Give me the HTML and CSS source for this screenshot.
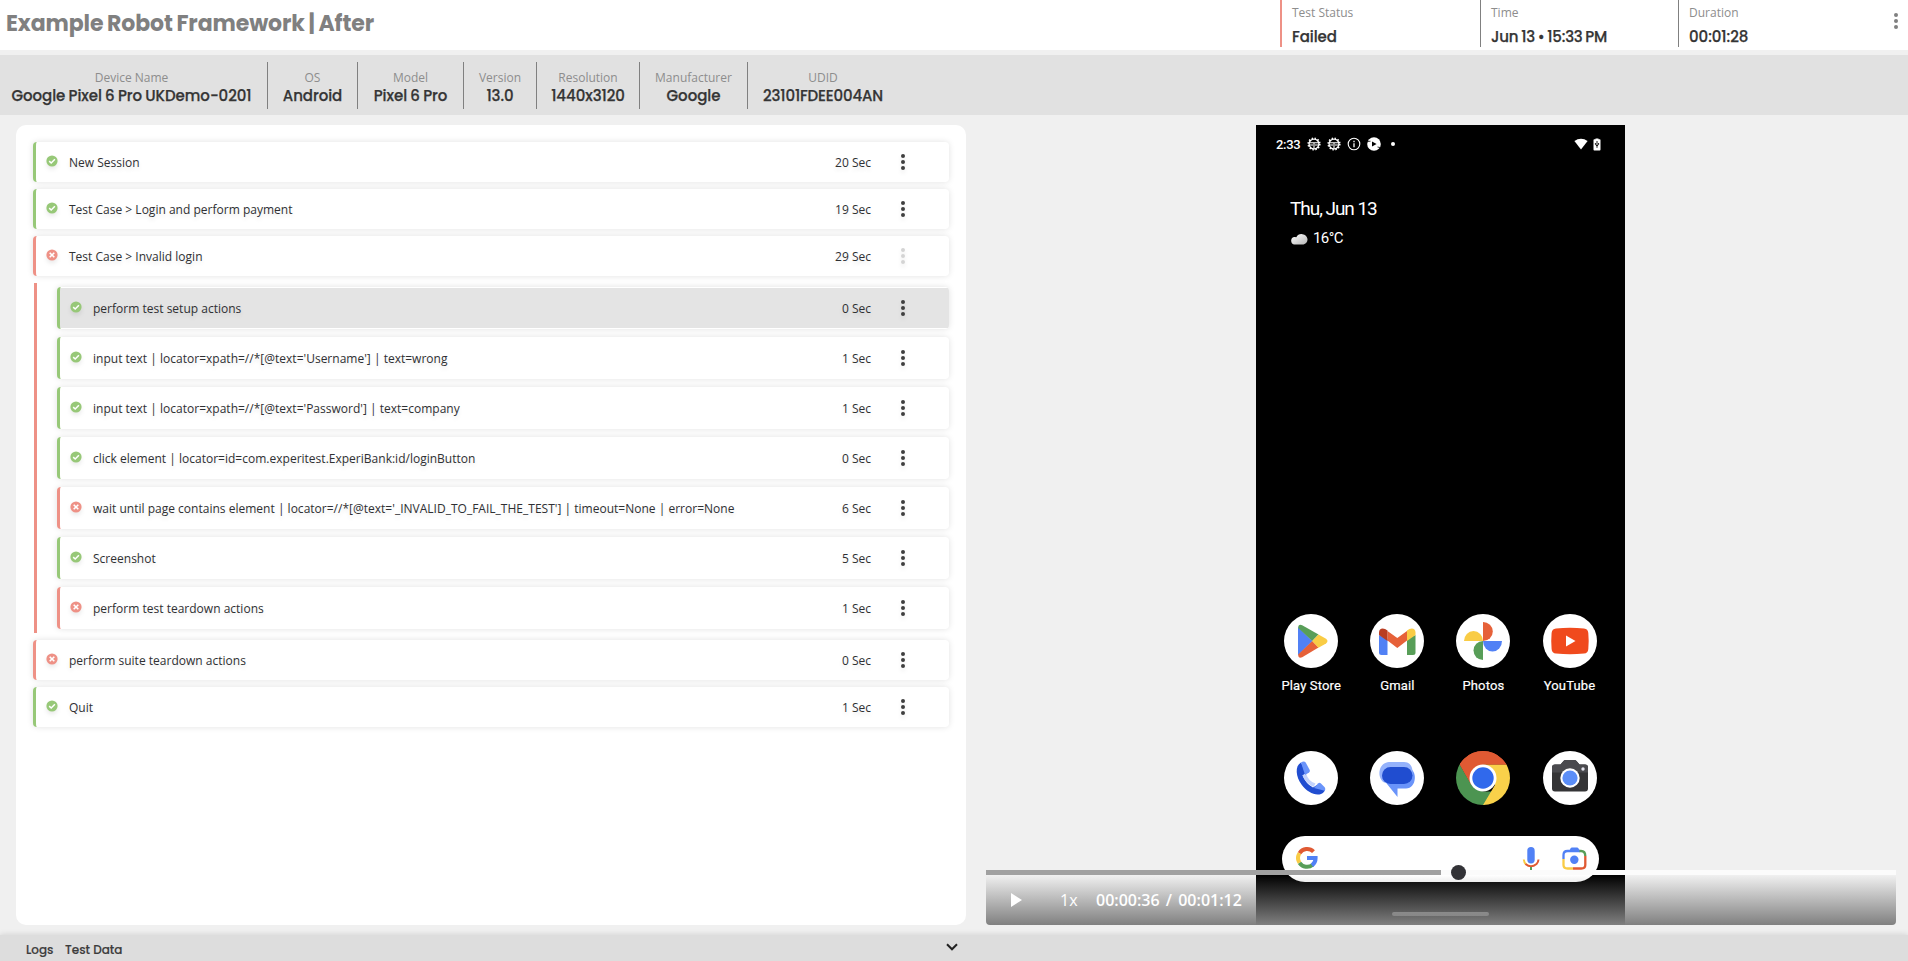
FILE: index.html
```html
<!DOCTYPE html>
<html lang="en">
<head>
<meta charset="utf-8">
<title>Example Robot Framework | After</title>
<link rel="stylesheet" href="styles.css">
</head>
<body>
<svg class="defs" width="0" height="0">
  <symbol id="ok" viewBox="0 0 12 12"><circle cx="6" cy="6" r="5.6" fill="#97c878"/><path d="M3.2 6.1 5.2 8 8.900 4.300" fill="none" stroke="#fff" stroke-width="1.5"/></symbol>
  <symbol id="bad" viewBox="0 0 12 12"><circle cx="6" cy="6" r="5.6" fill="#ee9186"/><path d="M3.700 3.700 8.300 8.300M8.300 3.700 3.700 8.300" fill="none" stroke="#fff" stroke-width="1.600"/></symbol>
  <symbol id="dots" viewBox="0 0 4 16"><circle cx="2" cy="2" r="2"/><circle cx="2" cy="8" r="2"/><circle cx="2" cy="14" r="2"/></symbol>
  <symbol id="gear" viewBox="0 0 14 14"><circle cx="7" cy="7" r="5.8" fill="none" stroke="#fff" stroke-width="1.600" stroke-dasharray="1.4 1.63"/><circle cx="7" cy="7" r="4.9" fill="none" stroke="#fff" stroke-width="1.3"/><path d="M2.5 5.7h9M2.5 8h3.500M8 8h3.500M7 5.700v5.800" stroke="#fff" stroke-width="1.1"/></symbol>
</svg>
<header class="top">
  <h1 class="title">Example Robot Framework | After</h1>
  <div class="stat stat-failed"><span class="label">Test Status</span><span class="value">Failed</span></div>
  <div class="stat stat-time"><span class="label">Time</span><span class="value">Jun 13 • 15:33 PM</span></div>
  <div class="stat stat-last"><span class="label">Duration</span><span class="value">00:01:28</span></div>
  <svg class="top-menu" width="4" height="16"><use href="#dots"/></svg>
</header>
<section class="device">
  <div class="cell c1"><span class="label">Device Name</span><span class="value">Google Pixel 6 Pro UKDemo-0201</span></div>
  <div class="cell c2"><span class="label">OS</span><span class="value">Android</span></div>
  <div class="cell c3"><span class="label">Model</span><span class="value">Pixel 6 Pro</span></div>
  <div class="cell c4"><span class="label">Version</span><span class="value">13.0</span></div>
  <div class="cell c5"><span class="label">Resolution</span><span class="value">1440x3120</span></div>
  <div class="cell c6"><span class="label">Manufacturer</span><span class="value">Google</span></div>
  <div class="cell c7"><span class="label">UDID</span><span class="value">23101FDEE004AN</span></div>
</section>
<main class="main">
  <section class="panel">
    <div class="step pass"><svg class="ico"><use href="#ok"/></svg><span class="name">New Session</span><span class="time">20 Sec</span><svg class="more"><use href="#dots"/></svg></div>
    <div class="step pass"><svg class="ico"><use href="#ok"/></svg><span class="name">Test Case &gt; Login and perform payment</span><span class="time">19 Sec</span><svg class="more"><use href="#dots"/></svg></div>
    <div class="step fail"><svg class="ico"><use href="#bad"/></svg><span class="name">Test Case &gt; Invalid login</span><span class="time">29 Sec</span><svg class="more off"><use href="#dots"/></svg></div>
    <div class="children">
      <div class="step pass selected"><svg class="ico"><use href="#ok"/></svg><span class="name">perform test setup actions</span><span class="time">0 Sec</span><svg class="more"><use href="#dots"/></svg></div>
      <div class="step pass"><svg class="ico"><use href="#ok"/></svg><span class="name">input text | locator=xpath=//*[@text='Username'] | text=wrong</span><span class="time">1 Sec</span><svg class="more"><use href="#dots"/></svg></div>
      <div class="step pass"><svg class="ico"><use href="#ok"/></svg><span class="name">input text | locator=xpath=//*[@text='Password'] | text=company</span><span class="time">1 Sec</span><svg class="more"><use href="#dots"/></svg></div>
      <div class="step pass"><svg class="ico"><use href="#ok"/></svg><span class="name">click element | locator=id=com.experitest.ExperiBank:id/loginButton</span><span class="time">0 Sec</span><svg class="more"><use href="#dots"/></svg></div>
      <div class="step fail"><svg class="ico"><use href="#bad"/></svg><span class="name">wait until page contains element | locator=//*[@text='_INVALID_TO_FAIL_THE_TEST'] | timeout=None | error=None</span><span class="time">6 Sec</span><svg class="more"><use href="#dots"/></svg></div>
      <div class="step pass"><svg class="ico"><use href="#ok"/></svg><span class="name">Screenshot</span><span class="time">5 Sec</span><svg class="more"><use href="#dots"/></svg></div>
      <div class="step fail"><svg class="ico"><use href="#bad"/></svg><span class="name">perform test teardown actions</span><span class="time">1 Sec</span><svg class="more"><use href="#dots"/></svg></div>
    </div>
    <div class="step fail"><svg class="ico"><use href="#bad"/></svg><span class="name">perform suite teardown actions</span><span class="time">0 Sec</span><svg class="more"><use href="#dots"/></svg></div>
    <div class="step pass"><svg class="ico"><use href="#ok"/></svg><span class="name">Quit</span><span class="time">1 Sec</span><svg class="more"><use href="#dots"/></svg></div>
  </section>
  <section class="video">
    <div class="phone">
      <div class="status">
        <span class="clock">2:33</span>
        <svg width="14" height="14"><use href="#gear"/></svg>
        <svg width="14" height="14"><use href="#gear"/></svg>
        <svg width="14" height="14" viewBox="0 0 14 14"><circle cx="7" cy="7" r="5.800" fill="none" stroke="#fff" stroke-width="1.1"/><path d="M7 6.2v4M7 3.8v1.4" stroke="#fff" stroke-width="1.3"/></svg>
        <svg width="14" height="14" viewBox="0 0 14 14"><circle cx="7" cy="7" r="6.8" fill="#fff"/><path d="M5 4.400v5.200L9.600 7z"/><path d="M.5 4.500 3.500 4.200M13 10.500 10.500 10" stroke="#000" stroke-width=".8"/></svg>
        <i class="dot"></i>
        <svg class="wifi" width="14" height="12" viewBox="0 0 14 12"><path d="M.4 3.1C4.2-.2 9.8-.2 13.6 3.1L7 11.5z" fill="#fff"/></svg>
        <svg width="8" height="13" viewBox="0 0 8 13"><path d="M1.3 1.3h1.2V.4h3v.9h1.2q.8 0 .8.8v9.500q0 .9-.8.9H1.3q-.8 0-.8-.9v-9.500q0-.8.8-.8z" fill="#fff"/><path d="M4 3v6.800M2.400 5v1.600L4 7.800l1.600-1.200V5" fill="none" stroke="#000" stroke-width=".9"/></svg>
      </div>
      <div class="date">Thu, Jun 13</div>
      <div class="weather"><svg width="18" height="13" viewBox="0 0 18 13"><defs><linearGradient id="cl" x2="1" y2="1"><stop stop-color="#fff"/><stop offset="1" stop-color="#b5b5b5"/></linearGradient></defs><path d="M4 12.500a3.900 3.900 0 0 1 0-7.500 3.500 3.500 0 0 1 2.300.3A6 6 0 0 1 17.500 7c.2 3-2 5.500-5 5.500z" fill="url(#cl)"/></svg><span>16°C</span></div>
      <div class="apps">
        <div class="app"><svg viewBox="0 0 54 54"><circle cx="27" cy="27" r="27" fill="#fff"/><path d="M14 13v28.500L28.500 27z" fill="#5181f5"/><path d="M14.200 14q0-4.500 4-2.800L34.500 20.500 28.300 27 14.200 14z" fill="#589e58"/><path d="M14.200 40.500q0 4.500 4 2.800L34.500 33.500 28.300 27z" fill="#e66139"/><path d="M34.500 20.500 42 24.800q3 2.300 0 4.700l-7.500 4.200L28.300 27z" fill="#f9cc45"/></svg><span>Play Store</span></div>
        <div class="app"><svg viewBox="0 0 54 54"><circle cx="27" cy="27" r="27" fill="#fff"/><path d="M9 21v17.500q0 2.500 2.500 2.500H17.500V25z" fill="#5181f5"/><path d="M45.500 21v17.500q0 2.500-2.500 2.500h-6V25z" fill="#589e58"/><path d="M17.500 17 27.300 24 37 17v9.500L27.300 34 17.500 26.500z" fill="#e66139"/><path d="M9 20V18.500c0-4.500 4.500-5.500 8.500-2v10.500L9 21z" fill="#b93d22"/><path d="M45.500 21V18.500c0-4.500-4.500-5.500-8.500-2v10.500z" fill="#f9cc45"/></svg><span>Gmail</span></div>
        <div class="app"><svg viewBox="0 0 54 54"><circle cx="27" cy="27" r="27" fill="#fff"/><path d="M27 27V8a9.800 9.500 0 0 1 0 19z" fill="#e66139"/><path d="M27 27h19a9.500 10.500 0 0 1-19 0z" fill="#5181f5"/><path d="M27 27v19a9.500 9.500 0 0 1 0-19z" fill="#589e58"/><path d="M27 27H8a9.500 10 0 0 1 19 0z" fill="#f9cc45"/></svg><span>Photos</span></div>
        <div class="app"><svg viewBox="0 0 54 54"><circle cx="27" cy="27" r="27" fill="#fff"/><path d="M13 14.500q14-1.300 28 0 4 .3 4.300 4.500.8 8 0 16-.3 4.300-4.300 4.600-14 1.300-28 0-4-.3-4.400-4.600-.7-8 0-16 .4-4.200 4.400-4.500z" fill="#f04a1d"/><path d="M23 21.500v11l9.500-5.500z" fill="#fff"/></svg><span>YouTube</span></div>
      </div>
      <div class="apps dock">
        <div class="app"><svg viewBox="0 0 54 54"><circle cx="27" cy="27" r="27" fill="#fff"/><path d="M17 11.500C10.500 15 12 26 17.500 33.500 23 41 31 45 37 43q2.500-1 4-3.500L33 34l-4 2.500q-7-3.500-10.500-12L22 22z" fill="#204dd0"/><path d="M18.500 24.500Q21.500 32 29.500 36l2-3.500q-7-2-9.500-10z" fill="#c3d3fd"/><path d="M17 11.500q3-2 4.700 0l4 7.500q.6 1.500-.7 2.500L21 24z" fill="#6a94fa"/><path d="M30 37l4-4.500q1.300-1.300 2.700-.2l4 4q1.300 1.700 0 3.400z" fill="#6a94fa"/></svg></div>
        <div class="app"><svg viewBox="0 0 54 54"><circle cx="27" cy="27" r="27" fill="#fff"/><path d="M13 28 27.500 46V37.500H36c11 0 12-19 2-21z" fill="#6a94fa"/><path d="M19 11h15c6 0 8.500 4.500 8.500 10S39 32 33 32H17C7 32 6 12 19 11z" fill="#94b2fc"/><rect x="12" y="16" width="30.500" height="17" rx="8.500" fill="#204dd0"/></svg></div>
        <div class="app"><svg viewBox="0 0 54 54"><defs><clipPath id="cc"><circle cx="27" cy="27" r="27"/></clipPath></defs><g clip-path="url(#cc)"><path d="M0 0h54v13.500H27L15 34 4 14z" fill="#e05a33"/><path d="M4 14 15.500 34 27 40.500h12L27 56H0V7z" fill="#4c9451"/><path d="M27 13.500h30V54H27l12-20z" fill="#f9d14a"/><path d="M4 14 15.500 34 27 27 27 13.500H52V0H0z" fill="#e05a33"/></g><circle cx="27" cy="27" r="13.500" fill="#fff"/><circle cx="27" cy="27" r="10.700" fill="#3069ec"/></svg></div>
        <div class="app"><svg viewBox="0 0 54 54"><circle cx="27" cy="27" r="27" fill="#fff"/><path d="M12 13.500h5.500l3-3.500q.8-1 2-1h9q1.200 0 2 1l3 3.500H42q3 0 3 3v21q0 3-3 3H12q-3 0-3-3v-21q0-3 3-3z" fill="#343436"/><path d="M12 13.500h5.500l3-3.500q.8-1 2-1h9q1.200 0 2 1l3 3.500H42q3 0 3 3v5H9v-5q0-3 3-3z" fill="#4a4a4e"/><circle cx="40" cy="18" r="1.700" fill="#e5e5ef"/><circle cx="27" cy="27" r="9.700" fill="#fff"/><circle cx="27" cy="27" r="7.600" fill="#5b8ef8"/></svg></div>
      </div>
      <div class="search">
        <svg width="22" height="22" viewBox="0 0 22 22" fill="none" stroke-width="4"><path d="M17.500 4.700A9 9 0 0 0 3.500 6.200" stroke="#e05a33"/><path d="M3.500 6.200a9 9 0 0 0 0 9.600" stroke="#f9cc45"/><path d="M3.500 15.800a9 9 0 0 0 13.200 1.900" stroke="#589e58"/><path d="M16 18.300A9 9 0 0 0 19.600 11H11" stroke="#5181f5"/></svg>
        <svg class="mic" width="18" height="24" viewBox="0 0 18 24"><rect x="5.300" y="0" width="7.400" height="16.500" rx="3.700" fill="#5181f5"/><path d="M1.800 12.500q.3 3 2.200 5" fill="none" stroke="#f9cc45" stroke-width="2"/><path d="M3.500 17q5.500 4.500 11 0 1.900-2 2-4.500" fill="none" stroke="#e05a33" stroke-width="2"/><path d="M9 20v4" stroke="#589e58" stroke-width="2"/></svg>
        <svg width="25" height="23" viewBox="0 0 25 23" fill="none" stroke-width="2.300"><path d="M1.500 12V8q0-4 4-4H18" stroke="#5181f5"/><path d="M7 4.500 8.500 1.500Q9 .5 10 .5h5q1 0 1.500 1L18 4.500z" fill="#5181f5"/><path d="M17.500 4H19q4.300 0 4.300 5" stroke="#589e58"/><path d="M23.300 9v9q0 3.500-4 3.500H11" stroke="#e05a33"/><path d="M1.500 12v6q0 3.500 4 3.500H11" stroke="#f9cc45"/><circle cx="12.300" cy="12.800" r="4.200" fill="#5181f5"/></svg>
      </div>
      <div class="home"></div>
    </div>
    <div class="player">
      <div class="track"><div class="played"></div><div class="knob"></div></div>
      <div class="controls"><svg width="11" height="14" viewBox="0 0 11 14"><path d="M0 0v14l11-7z" fill="#fff"/></svg><span class="speed">1x</span><span class="elapsed">00:00:36 / 00:01:12</span></div>
    </div>
  </section>
</main>
<footer class="foot"><span class="f1">Logs</span><span class="f2">Test Data</span><svg class="chev" width="12" height="8" viewBox="0 0 12 8"><path d="M1 1.300 6 6.300 11 1.300" fill="none" stroke="#222" stroke-width="2"/></svg></footer>
</body>
</html>
```

FILE: styles.css
```css
* { box-sizing: border-box; }
body { margin: 0; width: 1908px; height: 961px; overflow: hidden; background: #f0f0f0; font-family: "Open Sans", "Noto Sans", sans-serif; font-size: 12px; color: #2f3033; display: flex; flex-direction: column; }
svg { display: block; flex: none; }
.defs { position: absolute; }
.title, .value, .foot { font-family: Poppins, Inter, sans-serif; white-space: nowrap; }
.label { color: #8d8d8d; line-height: 16px; white-space: nowrap; }
.value { color: #353535; font-weight: 500; font-size: 15px; line-height: 20px; letter-spacing: -.05px; word-spacing: -.6px; -webkit-text-stroke: .25px; }

.top { height: 50px; background: #fff; display: flex; flex: none; }
.title { margin: 0; padding: 1px 0 0 6px; width: 1280px; font-size: 22px; line-height: 46px; font-weight: 700; letter-spacing: -.1px; word-spacing: -.9px; color: #808080; }
.stat { width: 200px; height: 47px; border-left: 1px solid #808080; padding: 5px 0 0 10px; display: flex; flex-direction: column; gap: 6px; }
.stat-failed { border-left: 2px solid #ee9186; }
.stat-time { width: 199px; }
.stat-time .value { letter-spacing: -.2px; word-spacing: -.9px; }
.stat-last { width: 215px; margin-left: -1px; }
.top-menu { fill: #808080; margin-top: 13px; margin-left: 1px; }

.device { margin-top: 5px; height: 60px; background: #e1e1e1; display: flex; flex: none; padding-top: 7px; }
.cell { height: 47px; border-right: 1px solid #808080; display: flex; flex-direction: column; align-items: center; padding-top: 8px; }
.c1 { width: 268px; padding-right: 4px; }
.c2 { width: 90px; }
.c3 { width: 106px; }
.c4 { width: 73px; }
.c5 { width: 103px; }
.c6 { width: 108px; }
.c7 { width: 150px; border: 0; }
.c7 .value { letter-spacing: -.15px; }

.main { margin-top: 10px; height: 800px; display: flex; padding-left: 16px; flex: none; }
.panel { width: 950px; background: #fff; border-radius: 10px; padding: 17px 17px 0; }
.step { height: 40px; margin-bottom: 7px; background: #fff; border-left: 3px solid; border-radius: 4px; box-shadow: 0 0 6px rgba(0,0,0,.12); display: flex; align-items: center; padding-left: 10px; white-space: nowrap; text-shadow: 0 3px 4px rgba(0,0,0,.1); }
.pass { border-color: #97c878; }
.fail { border-color: #ee9186; }
.ico { width: 12px; height: 12px; margin: -2px 11px 0 0; filter: drop-shadow(0 3px 2px rgba(0,0,0,.08)); }
.name { flex: 1; padding-top: 1px; letter-spacing: .01px; }
.time { padding-top: 1px; margin-right: 30px; }
.more { width: 4px; height: 16px; margin-right: 44px; fill: #3f3f3f; filter: drop-shadow(0 3px 2px rgba(0,0,0,.08)); }
.off { fill: #d4d4d4; }
.children { margin: 0 0 7px 1px; height: 350px; border-left: 3px solid #ee9186; padding: 4px 0 0 20px; }
.children .step { height: 42px; margin-bottom: 8px; }
.selected { background: linear-gradient(#e4e4e4, #e4e4e4) 0 1px / 100% 40px no-repeat #fff; }

.video { position: relative; width: 910px; margin-left: 20px; padding-left: 270px; }
.phone { width: 369px; height: 800px; background: #000; color: #fff; font-family: "Google Sans", Roboto, sans-serif; display: flex; flex-direction: column; }
.status { margin-top: 12px; height: 14px; padding: 0 24px 0 20px; display: flex; align-items: center; gap: 6px; }
.clock { font-size: 13px; width: 25px; font-weight: 500; letter-spacing: -.3px; }
.dot { width: 4px; height: 4px; border-radius: 2px; background: #fff; margin-left: 4px; }
.wifi { margin: 0 -1px 0 auto; }
.date { margin: 45px 0 0 34px; height: 26px; font-size: 19px; line-height: 26px; letter-spacing: -1.05px; word-spacing: 0; }
.weather { margin: 6px 0 0 34px; height: 20px; display: flex; align-items: center; gap: 5px; font-size: 15px; letter-spacing: -.6px; }
.apps { margin: 366px 0 0 12.2px; display: grid; grid-template-columns: repeat(4, 86.1px); height: 83px; }
.app { display: flex; flex-direction: column; align-items: center; font-size: 13px; line-height: 16px; gap: 10px; letter-spacing: .15px; -webkit-text-stroke: .2px; }
.app svg { width: 54px; height: 54px; }
.dock { margin-top: 54px; height: 54px; }
.search { margin: 31px 0 0 26px; width: 317px; height: 46px; border-radius: 23px; background: #fff; display: flex; padding: 11px 12px 0 14px; }
.mic { margin: 0 22px 0 auto; }
.home { margin: 30px 0 0 136px; width: 97px; height: 4px; border-radius: 2px; background: #a8a8a8; }

.player { position: absolute; left: 0; bottom: 0; width: 910px; height: 55px; border-radius: 0 0 4px 4px; }
.track { height: 5px; background: #fbfbfb; position: relative; }
.played { width: 455px; height: 5px; background: #a0a0a0; }
.knob { position: absolute; left: 465px; top: -5px; width: 15px; height: 15px; border-radius: 50%; background: #333337; }
.controls { height: 50px; border-radius: 0 0 4px 4px; background: linear-gradient(rgba(128,128,128,0), #808080); display: flex; align-items: center; padding-left: 25px; color: #fff; font-size: 16px; font-weight: 600; }
.speed { margin-left: 38px; width: 36px; font-weight: 400; }
.elapsed { word-spacing: 2px; }

.foot { margin-top: 10px; height: 26px; background: #ddd; display: flex; flex: none; padding-left: 26px; font-size: 12px; font-weight: 500; line-height: 30px; box-shadow: 0 0 6px rgba(0,0,0,.15); color: #3c3c3c; -webkit-text-stroke: .15px; }
.f1 { width: 39px; }
.f2 { width: 881px; }
.chev { margin-top: 8px; }
```
